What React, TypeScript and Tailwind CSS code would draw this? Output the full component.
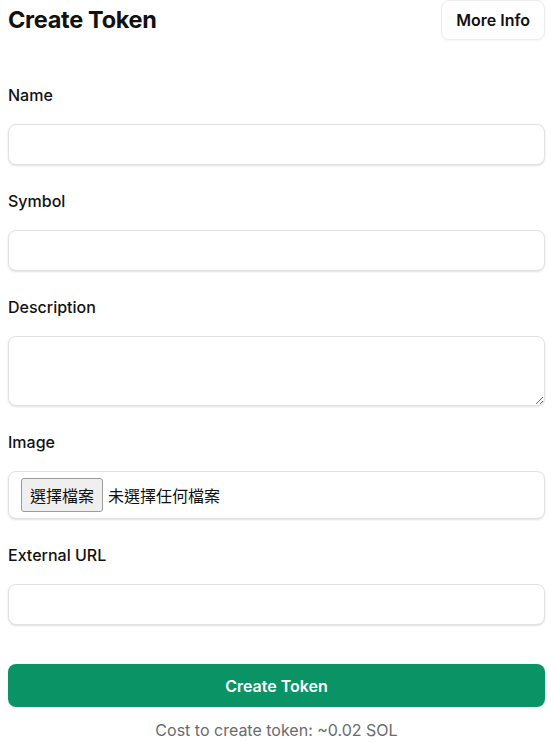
import React from "react";

const inputCls =
  "block w-full h-[41px] rounded-lg border border-[#e2e2e2] bg-white px-3 text-base shadow-[0_1px_2px_rgba(0,0,0,0.12)] outline-none";

function Field({ label, children }: { label: string; children: React.ReactNode }) {
  return (
    <div className="flex flex-col">
      <label className="mb-[17px] text-base font-medium leading-6 text-[#111]">{label}</label>
      {children}
    </div>
  );
}

export default function App() {
  return (
    <div
      className="min-h-screen w-full bg-white pl-2 pr-[6px] text-[#111]"
      style={{ fontFamily: "Inter, 'Noto Sans CJK TC', sans-serif" }}
    >
      <div className="flex items-center justify-between h-10">
        <h1 className="text-[23.5px] font-bold tracking-[-0.3px]">Create Token</h1>
        <button className="h-10 rounded-lg border border-[#ececec] bg-white px-[14px] text-base font-semibold shadow-[0_1px_2px_rgba(0,0,0,0.04)]">
          More Info
        </button>
      </div>

      <div className="mt-[43px] flex flex-col gap-6">
        <Field label="Name">
          <input className={inputCls} />
        </Field>
        <Field label="Symbol">
          <input className={inputCls} />
        </Field>
        <Field label="Description">
          <textarea className="block w-full h-[70px] rounded-lg border border-[#e2e2e2] bg-white px-3 py-2 text-base shadow-[0_1px_2px_rgba(0,0,0,0.12)] outline-none" />
        </Field>
        <Field label="Image">
          <div className="flex h-12 w-full items-center gap-[5px] rounded-lg border border-[#e2e2e2] bg-white px-3 shadow-[0_1px_2px_rgba(0,0,0,0.12)]">
            <span
              className="flex h-[34px] items-center rounded-[3px] border border-[#9a9a9a] bg-[#efefef] px-[8px] text-base"
              style={{ fontFamily: "'Noto Sans CJK TC', sans-serif" }}
            >
              選擇檔案
            </span>
            <span className="text-base" style={{ fontFamily: "'Noto Sans CJK TC', sans-serif" }}>
              未選擇任何檔案
            </span>
          </div>
        </Field>
        <Field label="External URL">
          <input className={inputCls} />
        </Field>
      </div>

      <button className="mt-[39px] h-[43px] w-full rounded-lg bg-[#0a9466] text-base font-semibold text-white">
        Create Token
      </button>
      <p className="mt-[11px] text-center text-base text-[#6b6b6b]">Cost to create token: ~0.02 SOL</p>
    </div>
  );
}
